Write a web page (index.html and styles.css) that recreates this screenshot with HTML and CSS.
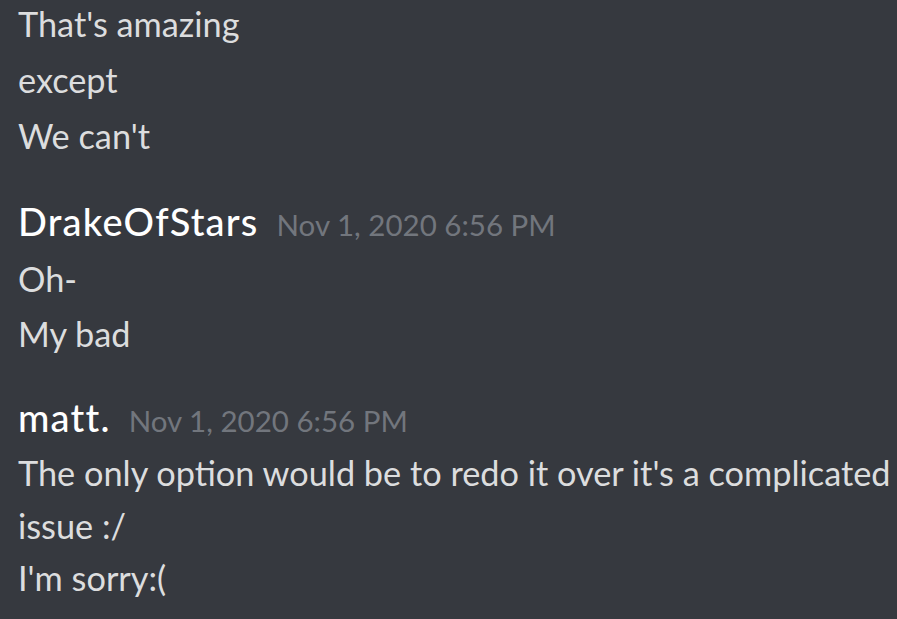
FILE: index.html
```html
<!DOCTYPE html>
<html>
<head>
<meta charset="utf-8">
<link rel="stylesheet" href="styles.css">
</head>
<body>
<div class="chat">
  <div class="group first lh-56">
    <div class="line">That's amazing</div>
    <div class="line">except</div>
    <div class="line">We can't</div>
  </div>
  <div class="group lh-55">
    <div class="header"><span class="name">DrakeOfStars</span><span class="time">Nov 1, 2020 6:56 PM</span></div>
    <div class="line">Oh-</div>
    <div class="line">My bad</div>
  </div>
  <div class="group lh-52">
    <div class="header"><span class="name">matt.</span><span class="time">Nov 1, 2020 6:56 PM</span></div>
    <div class="line">The only option would be to redo it over it's a complicated</div>
    <div class="line">issue :/</div>
    <div class="line">I'm sorry:(</div>
  </div>
</div>
</body>
</html>
```
FILE: styles.css
```css
html, body {
  margin: 0;
  padding: 0;
  background: #36393f;
  height: 100%;
  overflow: hidden;
}
.chat {
  padding-left: 18px;
  font-family: Lato, "Open Sans", sans-serif;
  font-size: 34.3px;
  color: #dcddde;
  display: flex;
  flex-direction: column;
  margin-top: -4px;
}
.group {
  display: flex;
  flex-direction: column;
  margin-top: 27.5px;
}
.group.first {
  margin-top: 0;
}
.line {
  white-space: nowrap;
}
.lh-56 .line { line-height: 56px; }
.lh-55 .line { line-height: 55px; }
.lh-52 .line { line-height: 52.5px; }
.header {
  font-size: 38px;
  line-height: 59px;
  white-space: nowrap;
}
.name {
  color: #ffffff;
  font-weight: 500;
  letter-spacing: 1.2px;
}
.time {
  color: #72767d;
  font-size: 29.5px;
  line-height: 1;
  margin-left: 18px;
}
```
